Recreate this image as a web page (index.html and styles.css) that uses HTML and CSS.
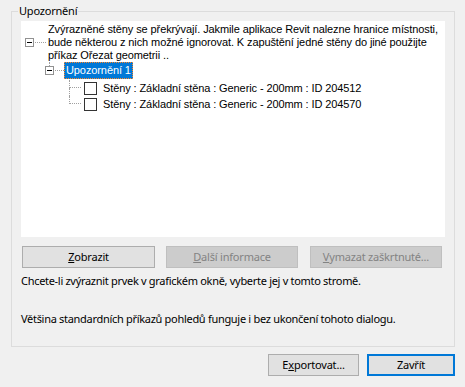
FILE: index.html
```html
<!DOCTYPE html>
<html lang="cs">
<head>
<meta charset="utf-8">
<title>Upozornění</title>
<link rel="stylesheet" href="styles.css">
</head>
<body>
<div class="dialog">
  <fieldset class="group">
    <legend class="group-title">Upozornění</legend>
    <div class="tree">
      <div class="node node-root">
        <div class="exp-cell"><span class="exp-box"></span></div>
        <span class="hline hline-root"></span>
        <div class="node-text multi">Zvýrazněné stěny se překrývají. Jakmile aplikace Revit nalezne hranice místnosti,<br>bude některou z nich možné ignorovat. K zapuštění jedné stěny do jiné použijte<br>příkaz Ořezat geometrii ..</div>
      </div>
      <div class="node node-l1">
        <div class="exp-cell exp-col">
          <span class="stem stem-top"></span>
          <span class="exp-box"></span>
          <span class="stem stem-bottom"></span>
        </div>
        <span class="hline hline-l1"></span>
        <div class="node-text selected">Upozornění 1</div>
      </div>
      <div class="node node-l2 first">
        <div class="conn"><span class="conn-top"></span><span class="conn-bottom more"></span></div>
        <span class="checkbox"></span>
        <div class="node-text">Stěny : Základní stěna : Generic - 200mm : ID 204512</div>
      </div>
      <div class="node node-l2">
        <div class="conn"><span class="conn-top"></span><span class="conn-bottom"></span></div>
        <span class="checkbox"></span>
        <div class="node-text">Stěny : Základní stěna : Generic - 200mm : ID 204570</div>
      </div>
    </div>
    <div class="btn-row">
      <button class="btn btn-show" type="button"><u>Z</u>obrazit</button>
      <button class="btn btn-info" type="button" disabled><u>D</u>alší informace</button>
      <button class="btn btn-clear" type="button" disabled><u>V</u>ymazat zaškrtnuté...</button>
    </div>
    <p class="hint hint-1">Chcete-li zvýraznit prvek v grafickém okně, vyberte jej v tomto stromě.</p>
    <p class="hint hint-2">Většina standardních příkazů pohledů funguje i bez ukončení tohoto dialogu.</p>
  </fieldset>
  <div class="footer">
    <button class="btn btn-export" type="button">E<u>x</u>portovat...</button>
    <button class="btn btn-close" type="button">Zavřít</button>
  </div>
</div>
</body>
</html>
```
FILE: styles.css
```css
html, body {
  margin: 0;
  padding: 0;
  background: #f0f0f0;
}

body {
  width: 465px;
  height: 387px;
  overflow: hidden;
  font-family: "Noto Sans", "Open Sans", sans-serif;
  font-size: 11px;
  color: #000;
}

.dialog {
  padding: 0 10px 0 11px;
}

.group {
  margin: 3px 0 0 0;
  padding: 2px 9px 19px 9px;
  border: 1px solid #dcdcdc;
  min-width: 0;
}

.group-title {
  margin-left: -3px;
  padding: 0 1px;
  line-height: 16px;
  font-size: 11px;
  letter-spacing: -0.2px;
}

/* tree */
.tree {
  background: #fff;
  height: 216px;
  padding-top: 2px;
  box-sizing: border-box;
  font-family: "Liberation Sans", Arial, sans-serif;
  font-size: 11px;
  letter-spacing: -0.1px;
  white-space: nowrap;
  overflow: hidden;
}

.node {
  display: flex;
  align-items: center;
}

.node-root {
  height: 39px;
}

.multi {
  line-height: 13px;
}

.exp-cell {
  width: 9px;
  display: flex;
  flex-direction: column;
  align-items: flex-start;
}

.node-root .exp-cell {
  margin-left: 4px;
}

.exp-box {
  display: block;
  width: 7px;
  height: 7px;
  border: 1px solid #919191;
  background: #fff;
}

.exp-box::after {
  content: "";
  display: block;
  margin: 3px 1px 0 1px;
  height: 1px;
  background: #000;
}

.hline {
  display: block;
  height: 0;
  border-top: 1px dotted #a0a0a0;
}

.hline-root {
  width: 11px;
  margin: 0 2px 0 1px;
}

.node-l1 {
  height: 17px;
  align-items: stretch;
}

.node-l1 .exp-cell {
  margin-left: 24px;
  justify-content: flex-start;
}

.exp-col .stem {
  display: block;
  width: 0;
  margin-left: 4px;
}

.stem-top {
  height: 4px;
  border-left: 1px dotted #a0a0a0;
}

.stem-bottom {
  flex: 1;
}

.hline-l1 {
  align-self: center;
  width: 9px;
  margin-left: 1px;
}

.selected {
  background: #0078d7;
  color: #fff;
  border: 1px dotted #ff8728;
  padding: 0 1px;
  line-height: 15px;
}

.node-l2 {
  height: 16px;
  align-items: stretch;
}

.node-l2.first {
  margin-top: 1px;
}

.conn {
  margin-left: 48px;
  width: 12px;
  display: flex;
  flex-direction: column;
}

.conn-top {
  display: block;
  height: 8px;
  border-left: 1px dotted #a0a0a0;
  border-bottom: 1px dotted #a0a0a0;
  box-sizing: border-box;
}

.conn-bottom {
  display: block;
  flex: 1;
}

.conn-bottom.more {
  border-left: 1px dotted #a0a0a0;
}

.checkbox {
  align-self: center;
  width: 11px;
  height: 11px;
  border: 1px solid #333;
  background: #fff;
  margin-left: 3px;
}

.node-l2 .node-text {
  align-self: center;
  margin-left: 6px;
  line-height: 16px;
}

/* buttons */
.btn-row {
  display: flex;
  margin-top: 9px;
  padding-left: 1px;
}

.btn {
  box-sizing: border-box;
  height: 22px;
  border: 1px solid #adadad;
  background: #e1e1e1;
  font-family: "Noto Sans", "Open Sans", sans-serif;
  font-size: 11px;
  letter-spacing: -0.2px;
  color: #000;
  padding: 0;
  margin: 0;
  line-height: 18px;
  border-radius: 0;
}

.btn:disabled {
  background: #cccccc;
  border-color: #bfbfbf;
  color: #838383;
}

.btn-show {
  width: 133px;
}

.btn-info {
  width: 132px;
  margin-left: 11px;
}

.btn-clear {
  width: 132px;
  margin-left: 12px;
}

.hint {
  margin: 0;
  line-height: 16px;
  letter-spacing: -0.3px;
}

.hint-1 {
  margin-top: 5px;
}

.hint-2 {
  margin-top: 22px;
}

.footer {
  display: flex;
  justify-content: flex-end;
  margin-top: 7px;
}

.btn-export {
  width: 91px;
}

.btn-close {
  width: 88px;
  margin-left: 8px;
  border: 2px solid #0078d7;
}
```
